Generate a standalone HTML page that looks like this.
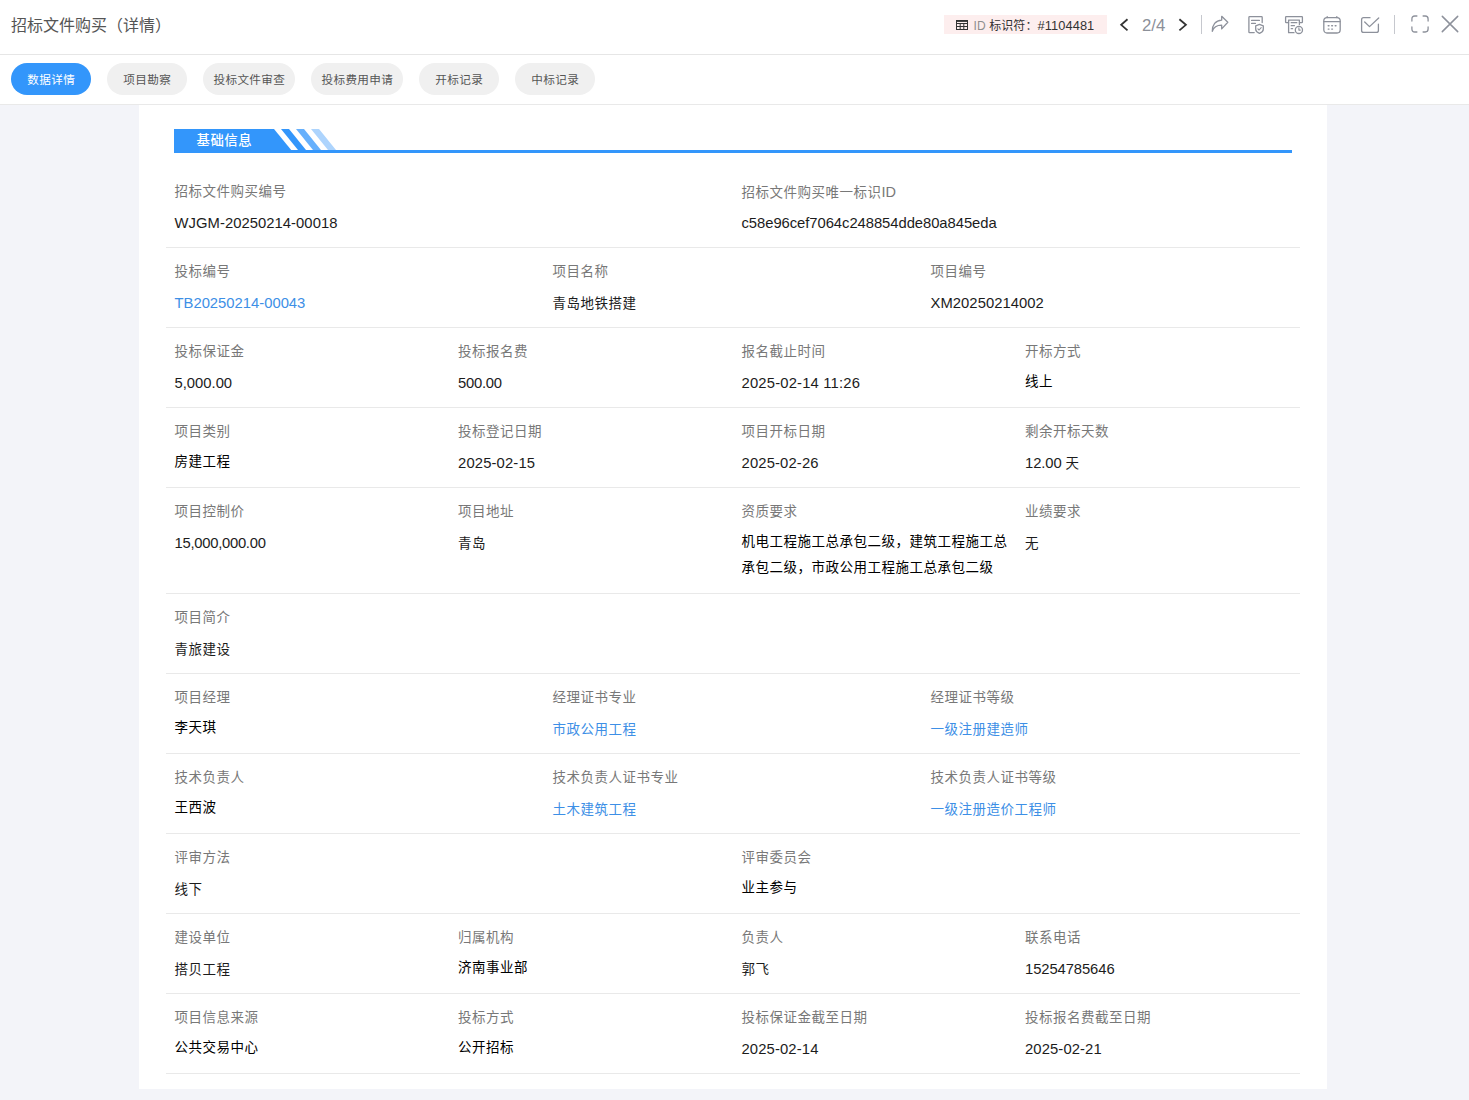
<!DOCTYPE html>
<html lang="zh-CN">
<head>
<meta charset="utf-8">
<title>招标文件购买（详情）</title>
<style>
*{box-sizing:border-box;margin:0;padding:0}
html,body{width:1469px;height:1100px;overflow:hidden;background:#f3f4f9;
  font-family:"Liberation Sans","Noto Sans CJK SC",sans-serif;color:#111;-webkit-font-smoothing:antialiased}
.hdr{position:absolute;left:0;top:0;width:1469px;height:55px;background:#fff;border-bottom:1px solid #e6e6e6}
.title{position:absolute;left:11px;top:14px;font-size:16px;line-height:24px;color:#555;white-space:nowrap;letter-spacing:0}
.idbadge{position:absolute;left:944px;top:15px;width:163px;height:19px;background:#fdeeee;font-size:12px;line-height:19px;color:#333;white-space:nowrap}
.idbadge svg{position:absolute;left:12px;top:5px}
.idbadge span{position:absolute;left:29.5px;top:1px;letter-spacing:0.1px}
.idbadge i{font-style:normal;color:#8e8e8e}
.idbadge b{font-weight:400;font-size:12.8px}
.pg{position:absolute;left:1142px;top:13.5px;font-size:16.8px;line-height:24px;color:#8c9099}
.vdiv{position:absolute;top:15px;width:1px;height:19px;background:#c6c8ce}
.ic{position:absolute}
.tabs{position:absolute;left:0;top:55px;width:1469px;height:50px;background:#fff;border-bottom:1px solid #e9e9e9}
.tab{position:absolute;top:8px;height:32px;min-width:80px;padding:0 10px;border-radius:16px;background:#f0f0f0;color:#555;
  font-size:11.6px;letter-spacing:0.4px;text-indent:0.4px;line-height:34px;text-align:center;white-space:nowrap}
.tab.on{background:#3396fb;color:#fff}
.card{position:absolute;left:139px;top:105px;width:1188px;height:984px;background:#fff}
.sec{position:absolute;left:35px;top:24px;width:1118px;height:24px}
.sec .bar{position:absolute;left:0;bottom:0;width:100%;height:3px;background:#3396fb}
.sec svg{position:absolute;left:0;top:0}
.sec .t{position:absolute;left:22.4px;top:1.4px;font-size:13.4px;letter-spacing:0.6px;line-height:22px;color:#fff;font-weight:500}
.rows{position:absolute;left:27px;top:63px;width:1134px}
.row{display:flex;border-bottom:1px solid #e9e9e9;min-height:80px}
.c{flex:1 1 0;padding:14px 8px 12px 8px;min-width:0}
.l{font-size:13.5px;letter-spacing:0.5px;line-height:20px;height:20px;color:#787878;white-space:nowrap;position:relative;top:-0.5px;left:0.5px}
.v{margin-top:7px;font-size:13.5px;letter-spacing:0.5px;line-height:26px;color:#1c1c1c;position:relative;top:1.5px;left:0.5px}
.v.s{top:0;color:#000}
.v.n{font-size:14.8px;top:1px;letter-spacing:0}
.v.a{color:#3d8fe6}
</style>
</head>
<body>
<div class="hdr">
  <div class="title">招标文件购买（详情）</div>
  <div class="idbadge">
    <svg width="12" height="10" viewBox="0 0 12 10" fill="none" stroke="#333" stroke-width="1"><rect x="0.5" y="0.5" width="11" height="9"/><path d="M0.5 1.2h11" stroke-width="1.4"/><path d="M0.5 3.5h11M0.5 6.5h11M4.2 3.5v6M7.8 3.5v6"/></svg>
    <span><i>ID</i> 标识符：<b>#1104481</b></span>
  </div>
  <svg class="ic" style="left:1118px;top:17px" width="12" height="16" viewBox="0 0 12 16" fill="none" stroke="#333" stroke-width="1.8"><path d="M9.5 2.3L3.2 7.85L9.5 13.4"/></svg>
  <div class="pg">2/4</div>
  <svg class="ic" style="left:1177px;top:17px" width="12" height="16" viewBox="0 0 12 16" fill="none" stroke="#333" stroke-width="1.8"><path d="M2.4 2.3L8.9 7.85L2.4 13.4"/></svg>

  <svg class="ic" style="left:1210px;top:14px" width="20" height="20" viewBox="0 0 20 20" fill="none" stroke="#8d919b" stroke-width="1.3" stroke-linejoin="round" stroke-linecap="round"><path d="M11.7 2.3L17.8 8.3L11.7 14.9V11.2C7 11.2 3.6 13 2.3 17.3C2.1 11 5.6 6.4 11.7 6.1Z"/></svg>
  <svg class="ic" style="left:1246px;top:14px" width="20" height="21" viewBox="0 0 20 21" fill="none" stroke="#8d919b" stroke-width="1.3" stroke-linejoin="round" stroke-linecap="round"><path d="M16.2 8.6V3.4Q16.2 2.7 15.5 2.7H3.6Q2.9 2.7 2.9 3.4V17.9Q2.9 18.6 3.6 18.6H8.2"/><path d="M5.6 6.4H13.4M5.6 9.4H9.4"/><path d="M13.5 10.4L17.3 11.8V15.2Q17.3 17.7 13.5 19.4Q9.7 17.7 9.7 15.2V11.8Z"/><path d="M11.9 14.8L13.1 16L15.2 13.6" stroke-width="1.1"/></svg>
  <svg class="ic" style="left:1283px;top:14px" width="22" height="21" viewBox="0 0 22 21" fill="none" stroke="#8d919b" stroke-width="1.3" stroke-linejoin="round" stroke-linecap="round"><path d="M5.6 8.6H3.2Q2.6 8.6 2.6 8V3.3Q2.6 2.7 3.2 2.7H18.8Q19.4 2.7 19.4 3.3V8Q19.4 8.6 18.8 8.6H16.4"/><path d="M16.4 10.6V6.1H5.6V18.7H11"/><path d="M8.2 8.7H13.8M8.2 11.7H11.4M8.2 14.7H9.6"/><circle cx="15.9" cy="15.9" r="3.6"/><path d="M15.9 13.9V16.1H17.3" stroke-width="1.1"/></svg>
  <svg class="ic" style="left:1322px;top:14px" width="20" height="21" viewBox="0 0 20 21" fill="none" stroke="#8d919b" stroke-width="1.3" stroke-linejoin="round" stroke-linecap="round"><rect x="1.8" y="3.6" width="16.4" height="15.4" rx="3.2"/><path d="M1.8 7.6H18.2M5.2 2.6V3.6M14.8 2.6V3.6"/><path d="M6.2 11.7H7M9.7 11.7H10.5M13.2 11.7H14M6.2 15.1H7M9.7 15.1H10.5" stroke-width="1.4"/></svg>
  <svg class="ic" style="left:1359px;top:14px" width="22" height="21" viewBox="0 0 22 21" fill="none" stroke="#8d919b" stroke-width="1.3" stroke-linejoin="round" stroke-linecap="round"><path d="M11 3.7H4.6Q2.6 3.7 2.6 5.7V16.4Q2.6 18.4 4.6 18.4H17.4Q19.4 18.4 19.4 16.4V10.2"/><path d="M5.7 8L10.5 12.6L19.7 4"/></svg>
  <svg class="ic" style="left:1409px;top:13px" width="22" height="22" viewBox="0 0 22 22" fill="none" stroke="#8d919b" stroke-width="1.3" stroke-linecap="round"><path d="M2.9 8V5.9Q2.9 3 5.8 3H7.9M14.1 3H16.2Q19.1 3 19.1 5.9V8M19.1 14V16.1Q19.1 19 16.2 19H14.1M7.9 19H5.8Q2.9 19 2.9 16.1V14"/></svg>
  <svg class="ic" style="left:1440px;top:14px" width="20" height="20" viewBox="0 0 20 20" fill="none" stroke="#8d919b" stroke-width="1.5" stroke-linecap="round"><path d="M2.3 2.4L17.7 17.6M17.7 2.4L2.3 17.6"/></svg>
  <div class="vdiv" style="left:1201px"></div>
  <div class="vdiv" style="left:1394px"></div>
</div>
<div class="tabs">
  <div class="tab on" style="left:11px">数据详情</div>
  <div class="tab" style="left:107px">项目勘察</div>
  <div class="tab" style="left:203px">投标文件审查</div>
  <div class="tab" style="left:311px">投标费用申请</div>
  <div class="tab" style="left:419px">开标记录</div>
  <div class="tab" style="left:515px">中标记录</div>
</div>
<div class="card">
  <div class="sec">
    <svg width="170" height="24" viewBox="0 0 170 24">
      <path d="M0 0H100L118 22V24H0Z" fill="#3396fb"/>
      <path d="M107 0H115L132 21H124Z" fill="#3396fb"/>
      <path d="M122 0H130L147 21H139Z" fill="#66b0fc"/>
      <path d="M137 0H145L162 21H154Z" fill="#add4fd"/>
    </svg>
    <div class="bar"></div>
    <div class="t">基础信息</div>
  </div>
  <div class="rows">
    <div class="row">
      <div class="c"><div class="l">招标文件购买编号</div><div class="v n" style="letter-spacing:0.05px">WJGM-20250214-00018</div></div>
      <div class="c"><div class="l">招标文件购买唯一标识<span style="font-size:14.5px;letter-spacing:0">ID</span></div><div class="v n" style="letter-spacing:-0.05px">c58e96cef7064c248854dde80a845eda</div></div>
    </div>
    <div class="row">
      <div class="c"><div class="l">投标编号</div><div class="v a n">TB20250214-00043</div></div>
      <div class="c"><div class="l">项目名称</div><div class="v">青岛地铁搭建</div></div>
      <div class="c"><div class="l">项目编号</div><div class="v n" style="letter-spacing:0.05px">XM20250214002</div></div>
    </div>
    <div class="row">
      <div class="c"><div class="l">投标保证金</div><div class="v n">5,000.00</div></div>
      <div class="c"><div class="l">投标报名费</div><div class="v n" style="letter-spacing:-0.25px">500.00</div></div>
      <div class="c"><div class="l">报名截止时间</div><div class="v n" style="letter-spacing:0.18px">2025-02-14 11:26</div></div>
      <div class="c"><div class="l">开标方式</div><div class="v s">线上</div></div>
    </div>
    <div class="row">
      <div class="c"><div class="l">项目类别</div><div class="v s">房建工程</div></div>
      <div class="c"><div class="l">投标登记日期</div><div class="v n" style="letter-spacing:0.15px">2025-02-15</div></div>
      <div class="c"><div class="l">项目开标日期</div><div class="v n" style="letter-spacing:0.15px">2025-02-26</div></div>
      <div class="c"><div class="l">剩余开标天数</div><div class="v n" style="letter-spacing:-0.1px">12.00 <span style="font-size:13.5px;line-height:0">天</span></div></div>
    </div>
    <div class="row">
      <div class="c"><div class="l">项目控制价</div><div class="v n" style="letter-spacing:-0.27px">15,000,000.00</div></div>
      <div class="c"><div class="l">项目地址</div><div class="v">青岛</div></div>
      <div class="c"><div class="l">资质要求</div><div class="v s">机电工程施工总承包二级，建筑工程施工总承包二级，市政公用工程施工总承包二级</div></div>
      <div class="c"><div class="l">业绩要求</div><div class="v">无</div></div>
    </div>
    <div class="row">
      <div class="c"><div class="l">项目简介</div><div class="v">青旅建设</div></div>
    </div>
    <div class="row">
      <div class="c"><div class="l">项目经理</div><div class="v s">李天琪</div></div>
      <div class="c"><div class="l">经理证书专业</div><div class="v a">市政公用工程</div></div>
      <div class="c"><div class="l">经理证书等级</div><div class="v a">一级注册建造师</div></div>
    </div>
    <div class="row">
      <div class="c"><div class="l">技术负责人</div><div class="v s">王西波</div></div>
      <div class="c"><div class="l">技术负责人证书专业</div><div class="v a">土木建筑工程</div></div>
      <div class="c"><div class="l">技术负责人证书等级</div><div class="v a">一级注册造价工程师</div></div>
    </div>
    <div class="row">
      <div class="c"><div class="l">评审方法</div><div class="v">线下</div></div>
      <div class="c"><div class="l">评审委员会</div><div class="v s">业主参与</div></div>
    </div>
    <div class="row">
      <div class="c"><div class="l">建设单位</div><div class="v">搭贝工程</div></div>
      <div class="c"><div class="l">归属机构</div><div class="v s">济南事业部</div></div>
      <div class="c"><div class="l">负责人</div><div class="v">郭飞</div></div>
      <div class="c"><div class="l">联系电话</div><div class="v n" style="letter-spacing:-0.09px">15254785646</div></div>
    </div>
    <div class="row">
      <div class="c"><div class="l">项目信息来源</div><div class="v s">公共交易中心</div></div>
      <div class="c"><div class="l">投标方式</div><div class="v s">公开招标</div></div>
      <div class="c"><div class="l">投标保证金截至日期</div><div class="v n" style="letter-spacing:0.13px">2025-02-14</div></div>
      <div class="c"><div class="l">投标报名费截至日期</div><div class="v n" style="letter-spacing:0.11px">2025-02-21</div></div>
    </div>
  </div>
</div>
</body>
</html>
